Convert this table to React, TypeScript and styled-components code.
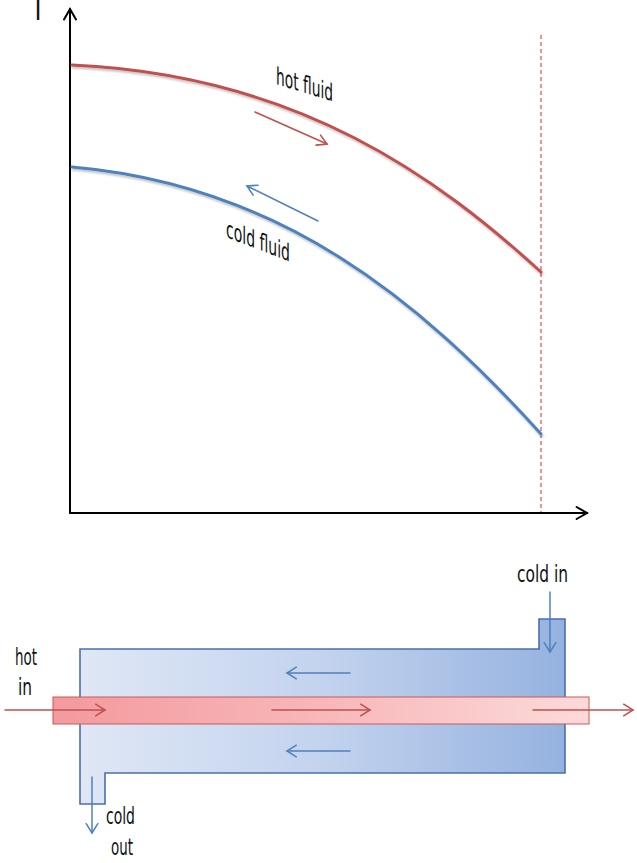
import React from 'react';
import styled, { createGlobalStyle } from 'styled-components';

const GlobalStyle = createGlobalStyle`
  html, body {
    margin: 0;
    padding: 0;
    background: #ffffff;
  }
`;

const Page = styled.div`
  width: 637px;
  height: 863px;
  overflow: hidden;
  background: #ffffff;
`;

const Figure = styled.svg`
  display: block;
  width: 637px;
  height: 863px;
`;

const Label = styled.text<{ $size?: number }>`
  font-family: 'DejaVu Sans Condensed', 'DejaVu Sans', sans-serif;
  font-stretch: condensed;
  font-size: ${p => p.$size ?? 23}px;
  fill: #111111;
`;

const Curve = styled.path<{ $color: string }>`
  fill: none;
  stroke: ${p => p.$color};
  stroke-width: 3;
  stroke-linecap: round;
`;

const Shell = styled.path`
  fill: url(#shellFill);
  stroke: #4a6fb0;
  stroke-width: 1.6;
`;

const Tube = styled.rect`
  fill: url(#tubeFill);
  stroke: #c9585a;
  stroke-width: 1;
`;

const Marker = styled.line`
  stroke: #d42b2b;
  stroke-width: 1;
  stroke-dasharray: 4 3;
`;

interface ArrowProps {
  x1: number;
  y1: number;
  x2: number;
  y2: number;
  color: string;
  width?: number;
  head?: number;
  spread?: number;
}

// line with an open chevron head at (x2, y2)
const Arrow: React.FC<ArrowProps> = ({ x1, y1, x2, y2, color, width = 1.5, head = 10, spread = 32 }) => {
  const a = Math.atan2(y2 - y1, x2 - x1);
  const s = (spread * Math.PI) / 180;
  const w1 = [x2 - head * Math.cos(a - s), y2 - head * Math.sin(a - s)];
  const w2 = [x2 - head * Math.cos(a + s), y2 - head * Math.sin(a + s)];
  return (
    <g stroke={color} strokeWidth={width} strokeLinecap="round" fill="none">
      <line x1={x1} y1={y1} x2={x2} y2={y2} />
      <polyline points={`${w1[0]},${w1[1]} ${x2},${y2} ${w2[0]},${w2[1]}`} />
    </g>
  );
};

const RED = '#c0504d';
const BLUE = '#4f81bd';

const App: React.FC = () => {
  return (
    <Page>
      <GlobalStyle />
      <Figure viewBox="0 0 637 863" xmlns="http://www.w3.org/2000/svg">
        <defs>
          <linearGradient id="shellFill" x1="0" y1="0" x2="1" y2="0">
            <stop offset="0" stopColor="#dfe7f5" />
            <stop offset="0.5" stopColor="#c3d3ee" />
            <stop offset="1" stopColor="#95b2df" />
          </linearGradient>
          <linearGradient id="tubeFill" x1="0" y1="0" x2="1" y2="0">
            <stop offset="0" stopColor="#f39a9d" />
            <stop offset="0.5" stopColor="#f8b7b9" />
            <stop offset="1" stopColor="#fcdada" />
          </linearGradient>
          <filter id="soft" x="-5%" y="-5%" width="110%" height="120%">
            <feDropShadow dx="1" dy="2" stdDeviation="1" floodColor="#000" floodOpacity="0.25" />
          </filter>
        </defs>

        {/* temperature profile */}
        <Label x={31} y={20} $size={36} textLength={14} lengthAdjust="spacingAndGlyphs">T</Label>
        <Marker x1={541} y1={35} x2={541} y2={513} />
        <Arrow x1={70} y1={513} x2={70} y2={9} color="#000" width={2} head={12} spread={30} />
        <Arrow x1={70} y1={513} x2={587} y2={513} color="#000" width={2} head={12} spread={30} />

        <g filter="url(#soft)">
          <Curve $color={RED} d="M72 65 C 300 75, 440 180, 541 272" />
          <Curve $color={BLUE} d="M72 167 C 280 185, 420 300, 541 434" />
        </g>

        <Arrow x1={255} y1={112} x2={327} y2={144} color={RED} width={1.6} head={11} spread={30} />
        <Arrow x1={318} y1={221} x2={247} y2={186} color={BLUE} width={1.6} head={11} spread={30} />

        <Label x={0} y={0} $size={24} textLength={57} lengthAdjust="spacingAndGlyphs" transform="translate(276 84) skewY(17)">
          hot fluid
        </Label>
        <Label x={0} y={0} $size={24} textLength={64} lengthAdjust="spacingAndGlyphs" transform="translate(226 237) skewY(21)">
          cold fluid
        </Label>

        {/* counterflow exchanger */}
        <Shell d="M80 649 L539 649 L539 619 L565 619 L565 773 L105 773 L105 804 L80 804 Z" />
        <Tube x={53} y={697} width={536} height={27} />

        <Arrow x1={5} y1={710} x2={105} y2={710} color={RED} head={11} spread={32} />
        <Arrow x1={272} y1={710} x2={370} y2={710} color={RED} head={11} spread={32} />
        <Arrow x1={533} y1={710} x2={633} y2={710} color={RED} head={11} spread={32} />
        <Arrow x1={350} y1={673} x2={287} y2={673} color={BLUE} head={11} spread={32} />
        <Arrow x1={350} y1={751} x2={287} y2={751} color={BLUE} head={11} spread={32} />
        <Arrow x1={550} y1={592} x2={550} y2={652} color={BLUE} head={11} spread={32} />
        <Arrow x1={92} y1={777} x2={92} y2={833} color={BLUE} head={11} spread={32} />

        <Label x={517} y={582} textLength={51} lengthAdjust="spacingAndGlyphs">cold in</Label>
        <Label x={15} y={665} textLength={22} lengthAdjust="spacingAndGlyphs">hot</Label>
        <Label x={18} y={695} textLength={14} lengthAdjust="spacingAndGlyphs">in</Label>
        <Label x={106} y={824} textLength={29} lengthAdjust="spacingAndGlyphs">cold</Label>
        <Label x={111} y={855} textLength={22} lengthAdjust="spacingAndGlyphs">out</Label>
      </Figure>
    </Page>
  );
};

export default App;
